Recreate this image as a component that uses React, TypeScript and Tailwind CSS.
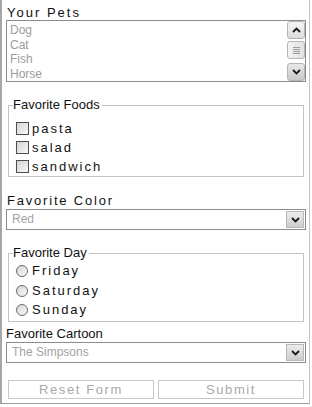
const pets = ["Dog", "Cat", "Fish", "Horse"];
const foods = ["pasta", "salad", "sandwich"];
const days = ["Friday", "Saturday", "Sunday"];

function Chevron({ up }: { up?: boolean }) {
  return (
    <svg width="9" height="6" viewBox="0 0 9 6" className="block">
      <path
        d={up ? "M1 5 L4.5 1.5 L8 5" : "M1 1 L4.5 4.5 L8 1"}
        fill="none"
        stroke="#1a1a1a"
        strokeWidth="1.8"
      />
    </svg>
  );
}

function ScrollButton({ up }: { up?: boolean }) {
  return (
    <div
      className={
        up
          ? "w-[18px] h-[18px] rounded-[3px] border border-[#b4b4b4] bg-gradient-to-b from-[#f6f6f6] to-[#dcdcdc] flex items-center justify-center"
          : "w-[18px] h-[18px] rounded-[3px] border border-[#b4b4b4] bg-gradient-to-b from-[#e8e8e8] to-[#c8c8c8] flex items-center justify-center"
      }
    >
      <Chevron up={up} />
    </div>
  );
}

function Select({ value }: { value: string }) {
  return (
    <div className="h-[21px] border border-[#8c8c8c] flex items-start justify-between bg-white">
      <span className="pl-[5px] text-[12px] leading-[19px] text-[#a3a3a3]">{value}</span>
      <div className="mt-[1px] mr-[1px] w-[18px] h-[17px] border border-[#b8b8b8] bg-gradient-to-b from-[#ececec] to-[#cdcdcd] flex items-center justify-center">
        <Chevron />
      </div>
    </div>
  );
}

export default function App() {
  return (
    <div className="w-[312px] h-[407px] bg-white font-['Liberation_Sans',Arial,sans-serif] text-[#111]">
      <div className="w-[310px] h-[404px] border-l-2 border-r border-b border-l-[#a6a6a6] border-r-[#c4c4c4] border-b-[#9c9c9c] pl-[4px] pr-[3px] flex flex-col">
        <div className="h-[20px] pt-[6px] pl-[1px] text-[13px] leading-[14px] tracking-[2px]">Your Pets</div>

        <div className="h-[62px] border border-[#8c8c8c] flex">
          <div className="flex-1 pl-[3px] pt-[2px] text-[12px] leading-[14.7px] text-[#9c9c9c]">
            {pets.map((p) => (
              <div key={p}>{p}</div>
            ))}
          </div>
          <div className="w-[18px] flex flex-col">
            <ScrollButton up />
            <div className="mt-[2px] h-[18px] rounded-[3px] border border-[#b4b4b4] bg-gradient-to-r from-[#f4f4f4] to-[#e2e2e2] flex flex-col items-center justify-center gap-[1px]">
              <div className="w-[7px] h-px bg-[#9a9a9a]" />
              <div className="w-[7px] h-px bg-[#9a9a9a]" />
              <div className="w-[7px] h-px bg-[#9a9a9a]" />
              <div className="w-[7px] h-px bg-[#9a9a9a]" />
            </div>
            <div className="mt-auto">
              <ScrollButton />
            </div>
          </div>
        </div>

        <fieldset className="mt-[15px] mx-[2px] border border-[#c4c4c4] pl-[4px] pb-0">
          <legend className="text-[13px] leading-[16px] pr-[2px]">Favorite Foods</legend>
          <div className="mt-[6px] flex flex-col">
            {foods.map((f) => (
              <div key={f} className="h-[19px] flex items-center">
                <span className="ml-[3px] w-[13px] h-[13px] border border-[#4e4e4e] bg-gradient-to-br from-[#d4d4d4] to-[#f8f8f8]" />
                <span className="ml-[3px] text-[13px] leading-[16px] tracking-[2px]">{f}</span>
              </div>
            ))}
          </div>
        </fieldset>

        <div className="h-[32px] pt-[17px] pl-[1px] text-[13px] leading-[14px] tracking-[1.8px]">Favorite Color</div>
        <Select value="Red" />

        <fieldset className="mt-[15px] mx-[2px] border border-[#c4c4c4] pl-[4px] pb-[1px]">
          <legend className="text-[13px] leading-[16px] pr-[2px]">Favorite Day</legend>
          <div className="mt-[0.5px] flex flex-col">
            {days.map((d) => (
              <div key={d} className="h-[19.5px] flex items-center">
                <span className="ml-[3px] w-[12px] h-[12px] rounded-full border border-[#6a6a6a] bg-gradient-to-br from-[#d6d6d6] to-[#fafafa]" />
                <span className="ml-[4px] text-[13px] leading-[16px] tracking-[2px]">{d}</span>
              </div>
            ))}
          </div>
        </fieldset>

        <div className="h-[20px] pt-[4.5px] text-[13px] leading-[14px]">Favorite Cartoon</div>
        <Select value="The Simpsons" />

        <div className="mt-[17px] mx-[2px] flex gap-[4px]">
          <button className="w-[146px] h-[19px] border border-[#c8c8c8] bg-white text-[13px] leading-[17px] tracking-[1.6px] text-[#a8a8a8]">
            Reset Form
          </button>
          <button className="w-[146px] h-[19px] border border-[#c8c8c8] bg-white text-[13px] leading-[17px] tracking-[1.6px] text-[#a8a8a8]">
            Submit
          </button>
        </div>
      </div>
    </div>
  );
}
